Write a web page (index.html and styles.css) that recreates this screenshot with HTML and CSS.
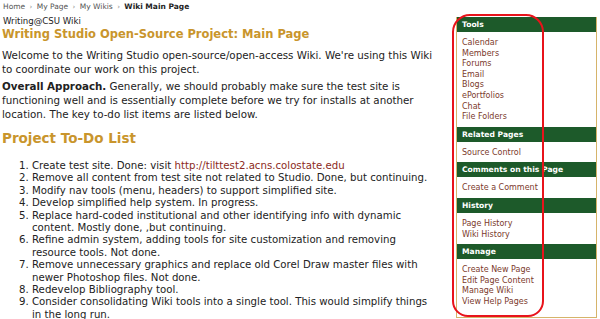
FILE: index.html
```html
<!DOCTYPE html>
<html lang="en">
<head>
    <meta charset="UTF-8">
    <title>Wiki Main Page</title>
    <link rel="stylesheet" href="styles.css">
</head>
<body>
    <div class="page">
        <div class="main">
            <div class="crumbs">
                <a href="#">Home</a> <span class="sep">&#8250;</span>
                <a href="#">My Page</a> <span class="sep">&#8250;</span>
                <a href="#">My Wikis</a> <span class="sep">&#8250;</span>
                <strong>Wiki Main Page</strong>
            </div>
            <div class="wiki-name">Writing@CSU Wiki</div>
            <h1>Writing Studio Open-Source Project: Main Page</h1>

            <p>Welcome to the Writing Studio open-source/open-access Wiki. We're using this Wiki to coordinate our work on this project.</p>
            <p><strong>Overall Approach.</strong> Generally, we should probably make sure the test site is functioning well and is essentially complete before we try for installs at another location. The key to-do list items are listed below.</p>

            <h2>Project To-Do List</h2>
            <ol class="todo">
                <li>Create test site. Done: visit <a href="#">http://tilttest2.acns.colostate.edu</a></li>
                <li>Remove all content from test site not related to Studio. Done, but continuing.</li>
                <li>Modify nav tools (menu, headers) to support simplified site.</li>
                <li>Develop simplified help system. In progress.</li>
                <li>Replace hard-coded institutional and other identifying info with dynamic content. Mostly done, ,but continuing.</li>
                <li>Refine admin system, adding tools for site customization and removing resource tools. Not done.</li>
                <li>Remove unnecessary graphics and replace old Corel Draw master files with newer Photoshop files. Not done.</li>
                <li>Redevelop Bibliography tool.</li>
                <li>Consider consolidating Wiki tools into a single tool. This would simplify things in the long run.</li>
            </ol>
        </div>

        <div class="sidebar">
            <div class="box-head">Tools</div>
            <ul class="box-links">
                <li><a href="#">Calendar</a></li>
                <li><a href="#">Members</a></li>
                <li><a href="#">Forums</a></li>
                <li><a href="#">Email</a></li>
                <li><a href="#">Blogs</a></li>
                <li><a href="#">ePortfolios</a></li>
                <li><a href="#">Chat</a></li>
                <li><a href="#">File Folders</a></li>
            </ul>
            <div class="box-head">Related Pages</div>
            <ul class="box-links">
                <li><a href="#">Source Control</a></li>
            </ul>
            <div class="box-head">Comments on this Page</div>
            <ul class="box-links">
                <li><a href="#">Create a Comment</a></li>
            </ul>
            <div class="box-head">History</div>
            <ul class="box-links">
                <li><a href="#">Page History</a></li>
                <li><a href="#">Wiki History</a></li>
            </ul>
            <div class="box-head">Manage</div>
            <ul class="box-links last">
                <li><a href="#">Create New Page</a></li>
                <li><a href="#">Edit Page Content</a></li>
                <li><a href="#">Manage Wiki</a></li>
                <li><a href="#">View Help Pages</a></li>
            </ul>
            <div class="highlight"></div>
        </div>
    </div>
</body>
</html>
```

FILE: styles.css
```css
body {
    margin: 0;
    font-family: "DejaVu Sans", Verdana, sans-serif;
    color: #222;
    background: #fff;
}
.page {
    display: flex;
    align-items: flex-start;
}
.main {
    flex: none;
    width: 434px;
    padding: 1px 0 0 2px;
}
.crumbs {
    font-size: 7.5px;
    color: #555;
    line-height: 11px;
    padding-left: 1px;
}
.crumbs a {
    color: #555;
    text-decoration: none;
}
.crumbs .sep {
    font-size: 7px;
    color: #888;
    padding: 0 2px;
}
.crumbs strong {
    color: #222;
}
.wiki-name {
    font-size: 8.6px;
    line-height: 11px;
    margin-top: 3px;
    padding-left: 1px;
}
h1 {
    font-size: 11.5px;
    line-height: 14px;
    color: #c9952c;
    margin: 0 0 7px;
}
p {
    font-size: 10.3px;
    line-height: 14px;
    margin: 0 0 3px;
}
h2 {
    font-size: 13.5px;
    line-height: 18px;
    color: #c9952c;
    margin: 8px 0 13px;
}
.todo {
    font-size: 10.2px;
    line-height: 12.4px;
    margin: 0;
    padding-left: 30px;
}
.todo a {
    color: #8c2a22;
    text-decoration: none;
}
.sidebar {
    position: relative;
    width: 139px;
    margin: 17px 3px 0 auto;
    border: 1px solid #d6b46a;
    border-top: none;
}
.box-head {
    background: #1d5a2a;
    color: #fff;
    font-weight: bold;
    font-size: 7.6px;
    line-height: 15px;
    padding-left: 5px;
}
.box-links {
    list-style: none;
    margin: 0;
    padding: 6px 0 4px 5px;
    font-size: 8px;
    line-height: 10.6px;
}
.box-links.last {
    padding-bottom: 9px;
}
.box-links a {
    color: #7b3a2c;
    text-decoration: none;
}
.highlight {
    position: absolute;
    left: -5px;
    top: -3px;
    width: 88px;
    height: 299px;
    border: 2px solid #e8131b;
    border-radius: 18px 18px 16px 16px;
    pointer-events: none;
}
```
